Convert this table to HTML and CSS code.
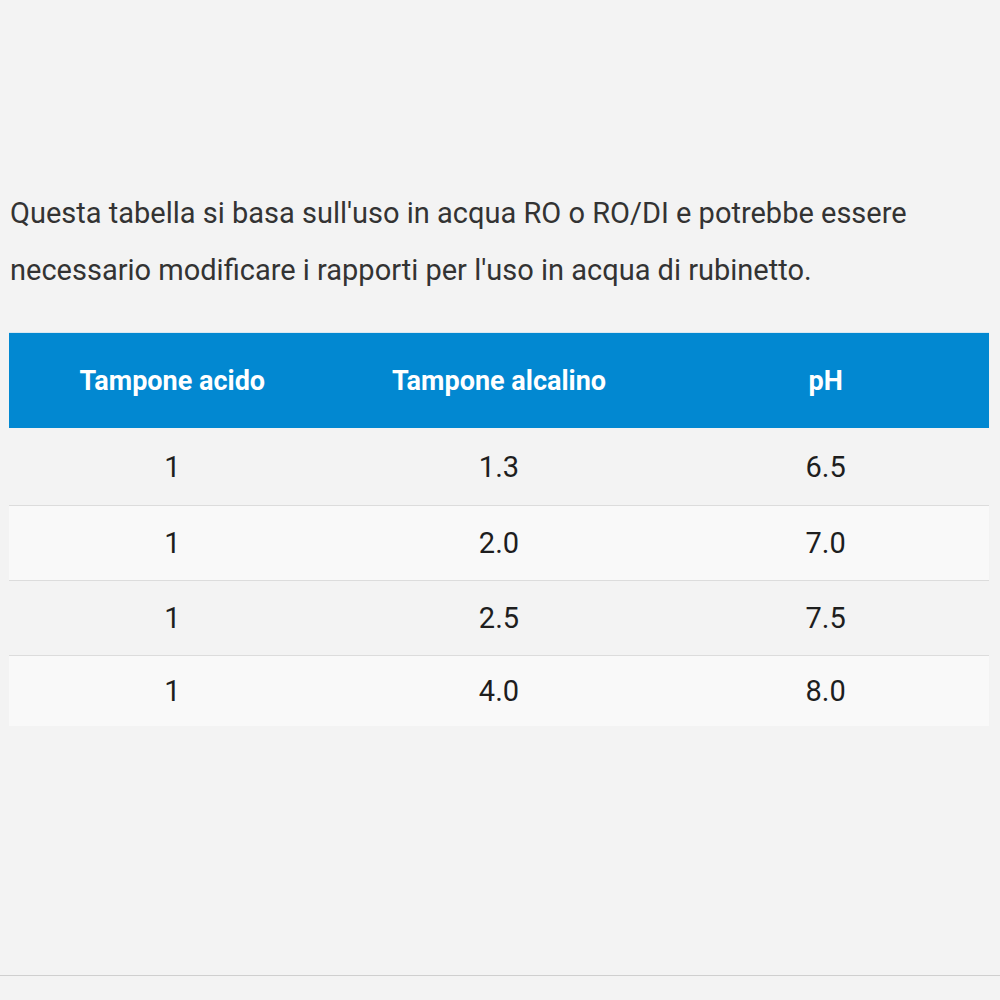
FILE: index.html
```html
<!DOCTYPE html>
<html>
<head>
<meta charset="utf-8">
<link rel="stylesheet" href="styles.css">
</head>
<body>
<main class="content">
  <p class="intro">Questa tabella si basa sull'uso in acqua RO o RO/DI e potrebbe essere necessario modificare i rapporti per l'uso in acqua di rubinetto.</p>
  <table class="ratio-table">
    <thead>
      <tr><th>Tampone acido</th><th>Tampone alcalino</th><th>pH</th></tr>
    </thead>
    <tbody>
      <tr class="first-row"><td>1</td><td>1.3</td><td>6.5</td></tr>
      <tr><td>1</td><td>2.0</td><td>7.0</td></tr>
      <tr><td>1</td><td>2.5</td><td>7.5</td></tr>
      <tr><td>1</td><td>4.0</td><td>8.0</td></tr>
    </tbody>
  </table>
</main>
<footer class="bottom-rule"></footer>
</body>
</html>
```
FILE: styles.css
```css
html, body {
  margin: 0;
  padding: 0;
  background: #f3f3f3;
  height: 1000px;
  overflow: hidden;
}
body {
  font-family: Roboto, "Liberation Sans", sans-serif;
  color: #333;
}
.content {
  padding: 185px 11px 0 9px;
  height: 790px;
  box-sizing: border-box;
}
.intro {
  margin: 0 0 33px 1px;
  font-size: 29px;
  line-height: 57px;
  color: #333;
  width: 960px;
}
.ratio-table {
  width: 980px;
  border-collapse: collapse;
  table-layout: fixed;
}
.ratio-table th {
  background: #0288d1;
  color: #fff;
  font-weight: 700;
  font-size: 27px;
  height: 95px;
  padding: 0;
  text-align: center;
  border-top: 1px solid #d8e8f2;
}
.ratio-table td {
  font-size: 29px;
  color: #1e1e1e;
  text-align: center;
  height: 74px;
  padding: 0;
  border-bottom: 1px solid #dcdcdc;
}
.ratio-table .first-row td {
  height: 76px;
  padding-top: 1px;
}
.ratio-table tbody tr:nth-child(even) td {
  background: #f9f9f9;
}
.ratio-table tbody tr:last-child td {
  border-bottom: none;
  height: 70px;
  background: #f9f9f9;
}
.ratio-table tbody tr:nth-child(3) td {
  background: #f3f3f3;
}
.bottom-rule {
  height: 0;
  border-top: 1px solid #cfcfcf;
  margin-top: 185px;
}
```
